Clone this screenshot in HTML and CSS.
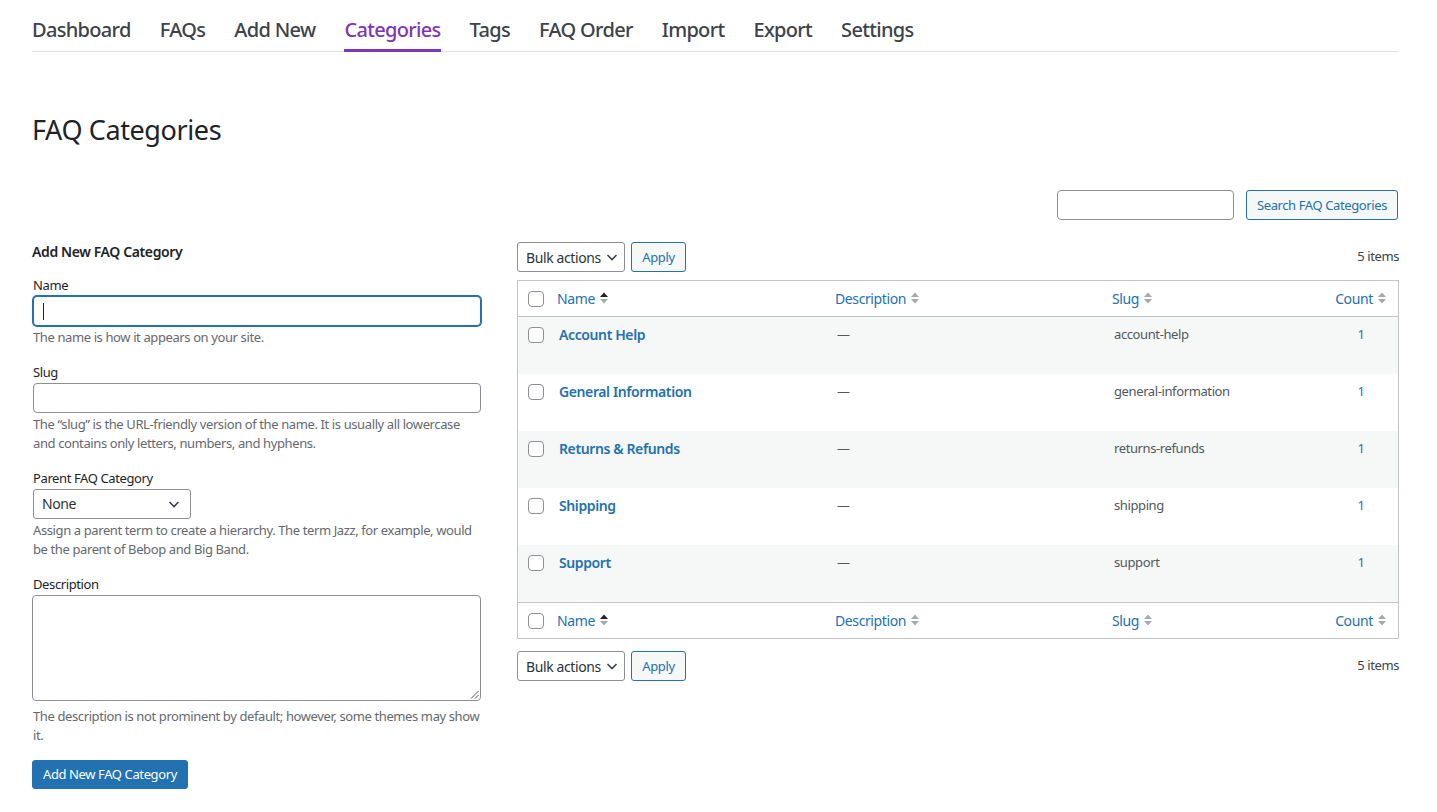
FILE: index.html
```html
<!DOCTYPE html>
<html lang="en">
<head>
<meta charset="utf-8">
<title>FAQ Categories</title>
<link rel="stylesheet" href="styles.css">
</head>
<body>
<div class="wrap">
  <nav class="tabs">
    <a class="tab" href="#">Dashboard</a>
    <a class="tab" href="#">FAQs</a>
    <a class="tab" href="#">Add New</a>
    <a class="tab active" href="#">Categories</a>
    <a class="tab" href="#">Tags</a>
    <a class="tab" href="#">FAQ Order</a>
    <a class="tab" href="#">Import</a>
    <a class="tab" href="#">Export</a>
    <a class="tab" href="#">Settings</a>
  </nav>

  <h1 class="page-title">FAQ Categories</h1>

  <div class="search-box">
    <input class="search-input" type="search" aria-label="Search FAQ Categories">
    <button class="btn-secondary search-btn">Search FAQ Categories</button>
  </div>

  <div class="cols">
    <div class="col-left">
      <h2 class="form-title">Add New FAQ Category</h2>
      <div class="field">
        <label class="label">Name</label>
        <div class="input focused"><span class="caret"></span></div>
        <p class="help">The name is how it appears on your site.</p>
      </div>
      <div class="field">
        <label class="label">Slug</label>
        <div class="input"></div>
        <p class="help">The “slug” is the URL-friendly version of the name. It is usually all lowercase and contains only letters, numbers, and hyphens.</p>
      </div>
      <div class="field">
        <label class="label">Parent FAQ Category</label>
        <div class="select parent-select"><span>None</span>
          <svg class="chev" width="16" height="16" viewBox="0 0 16 16"><path d="M3.5 6l4.5 4.5L12.5 6" fill="none" stroke="#3c434a" stroke-width="1.6"/></svg>
        </div>
        <p class="help">Assign a parent term to create a hierarchy. The term Jazz, for example, would be the parent of Bebop and Big Band.</p>
      </div>
      <div class="field">
        <label class="label">Description</label>
        <div class="textarea">
          <svg class="grip" width="9" height="9" viewBox="0 0 9 9"><path d="M8.5 1L1 8.5M8.5 5L5 8.5" stroke="#50575e" stroke-width="1"/></svg>
        </div>
        <p class="help">The description is not prominent by default; however, some themes may show it.</p>
      </div>
      <button class="btn-primary">Add New FAQ Category</button>
    </div>

    <div class="col-right">
      <div class="tablenav">
        <div class="actions">
          <div class="select bulk"><span>Bulk actions</span>
            <svg class="chev" width="16" height="16" viewBox="0 0 16 16"><path d="M3.5 6l4.5 4.5L12.5 6" fill="none" stroke="#3c434a" stroke-width="1.6"/></svg>
          </div>
          <button class="btn-secondary apply">Apply</button>
        </div>
        <span class="count-items">5 items</span>
      </div>

      <table class="list">
        <colgroup>
          <col class="c-cb"><col class="c-name"><col class="c-desc"><col class="c-slug"><col class="c-count">
        </colgroup>
        <thead>
          <tr>
            <td class="cb"><span class="checkbox"></span></td>
            <th><a href="#">Name <svg class="sort" width="10" height="14" viewBox="0 0 10 14"><path d="M1 6L5 1.5 9 6z" fill="#1d2327"/><path d="M1 8l4 4.5L9 8z" fill="#a7aaad"/></svg></a></th>
            <th><a href="#">Description <svg class="sort" width="10" height="14" viewBox="0 0 10 14"><path d="M1 6L5 1.5 9 6z" fill="#a7aaad"/><path d="M1 8l4 4.5L9 8z" fill="#a7aaad"/></svg></a></th>
            <th><a href="#">Slug <svg class="sort" width="10" height="14" viewBox="0 0 10 14"><path d="M1 6L5 1.5 9 6z" fill="#a7aaad"/><path d="M1 8l4 4.5L9 8z" fill="#a7aaad"/></svg></a></th>
            <th class="num"><a href="#">Count <svg class="sort" width="10" height="14" viewBox="0 0 10 14"><path d="M1 6L5 1.5 9 6z" fill="#a7aaad"/><path d="M1 8l4 4.5L9 8z" fill="#a7aaad"/></svg></a></th>
          </tr>
        </thead>
        <tbody>
          <tr class="alt">
            <td class="cb"><span class="checkbox"></span></td>
            <td><a class="row-title" href="#">Account Help</a><div class="row-actions">Edit</div></td>
            <td>—</td><td>account-help</td><td class="num"><a href="#">1</a></td>
          </tr>
          <tr>
            <td class="cb"><span class="checkbox"></span></td>
            <td><a class="row-title" href="#">General Information</a><div class="row-actions">Edit</div></td>
            <td>—</td><td>general-information</td><td class="num"><a href="#">1</a></td>
          </tr>
          <tr class="alt">
            <td class="cb"><span class="checkbox"></span></td>
            <td><a class="row-title" href="#">Returns &amp; Refunds</a><div class="row-actions">Edit</div></td>
            <td>—</td><td>returns-refunds</td><td class="num"><a href="#">1</a></td>
          </tr>
          <tr>
            <td class="cb"><span class="checkbox"></span></td>
            <td><a class="row-title" href="#">Shipping</a><div class="row-actions">Edit</div></td>
            <td>—</td><td>shipping</td><td class="num"><a href="#">1</a></td>
          </tr>
          <tr class="alt">
            <td class="cb"><span class="checkbox"></span></td>
            <td><a class="row-title" href="#">Support</a><div class="row-actions">Edit</div></td>
            <td>—</td><td>support</td><td class="num"><a href="#">1</a></td>
          </tr>
        </tbody>
        <tfoot>
          <tr>
            <td class="cb"><span class="checkbox"></span></td>
            <th><a href="#">Name <svg class="sort" width="10" height="14" viewBox="0 0 10 14"><path d="M1 6L5 1.5 9 6z" fill="#1d2327"/><path d="M1 8l4 4.5L9 8z" fill="#a7aaad"/></svg></a></th>
            <th><a href="#">Description <svg class="sort" width="10" height="14" viewBox="0 0 10 14"><path d="M1 6L5 1.5 9 6z" fill="#a7aaad"/><path d="M1 8l4 4.5L9 8z" fill="#a7aaad"/></svg></a></th>
            <th><a href="#">Slug <svg class="sort" width="10" height="14" viewBox="0 0 10 14"><path d="M1 6L5 1.5 9 6z" fill="#a7aaad"/><path d="M1 8l4 4.5L9 8z" fill="#a7aaad"/></svg></a></th>
            <th class="num"><a href="#">Count <svg class="sort" width="10" height="14" viewBox="0 0 10 14"><path d="M1 6L5 1.5 9 6z" fill="#a7aaad"/><path d="M1 8l4 4.5L9 8z" fill="#a7aaad"/></svg></a></th>
          </tr>
        </tfoot>
      </table>

      <div class="tablenav bottom">
        <div class="actions">
          <div class="select bulk"><span>Bulk actions</span>
            <svg class="chev" width="16" height="16" viewBox="0 0 16 16"><path d="M3.5 6l4.5 4.5L12.5 6" fill="none" stroke="#3c434a" stroke-width="1.6"/></svg>
          </div>
          <button class="btn-secondary apply">Apply</button>
        </div>
        <span class="count-items">5 items</span>
      </div>
    </div>
  </div>
</div>
</body>
</html>
```

FILE: styles.css
```css
* { box-sizing: border-box; }
html, body { margin: 0; padding: 0; background: #fff; }
body {
  font-family: "Segoe UI", "Noto Sans", "Open Sans", sans-serif;
  font-size: 13px;
  line-height: 1.5;
  color: #3c434a;
  letter-spacing: -0.03em;
}
a { text-decoration: none; color: #2271b1; }
button, input { letter-spacing: inherit; }

.wrap { padding: 0 39px 0 32px; }

/* tabs */
.tabs {
  display: flex;
  gap: 29px;
  padding-top: 14px;
  border-bottom: 1px solid #e0e0e0;
}
.tab {
  font-size: 20px;
  font-weight: 500;
  line-height: 32px;
  letter-spacing: -0.034em;
  color: #3c434a;
  padding-bottom: 3px;
  border-bottom: 3px solid transparent;
  margin-bottom: -1px;
}
.tab.active { color: #7e36b8; border-bottom-color: #7e36b8; }

.page-title {
  font-size: 27px;
  font-weight: 400;
  color: #1d2327;
  line-height: 36px;
  margin: 60px 0 0;
}

.search-box {
  display: flex;
  justify-content: flex-end;
  gap: 12px;
  margin-top: 42px;
}
.search-input {
  width: 177px;
  height: 30px;
  border: 1px solid #8c8f94;
  border-radius: 4px;
  margin: 0;
  padding: 0 8px;
}
.btn-secondary {
  font-family: inherit;
  font-size: 13px;
  color: #2271b1;
  background: #f6f7f7;
  border: 1px solid #2271b1;
  border-radius: 3px;
  height: 30px;
  padding: 0 10px;
  margin: 0;
  cursor: pointer;
  white-space: nowrap;
}
.search-btn { width: 152px; padding: 0; }

.cols {
  display: grid;
  grid-template-columns: 449px 1fr;
  gap: 36px;
  margin-top: 22px;
}

/* left form */
.col-left { padding-left: 1px; }
.form-title {
  font-size: 14px;
  font-weight: 600;
  color: #1d2327;
  line-height: 20px;
  margin: 0 0 13px;
  margin-left: -1px;
}
.field { margin-bottom: 14px; }
.label {
  display: block;
  color: #1d2327;
  line-height: 20px;
  margin-bottom: 1px;
}
.input {
  height: 30px;
  border: 1px solid #8c8f94;
  border-radius: 4px;
  background: #fff;
  position: relative;
}
.input.focused {
  border-color: #2271b1;
  box-shadow: 0 0 0 1px #2271b1;
}
.caret {
  position: absolute;
  left: 9px;
  top: 6px;
  width: 1px;
  height: 17px;
  background: #1d2327;
}
.help {
  margin: 2px 0 0;
  color: #646970;
  line-height: 19.5px;
}
.select {
  height: 30px;
  border: 1px solid #8c8f94;
  border-radius: 3px;
  background: #fff;
  display: flex;
  align-items: center;
  justify-content: space-between;
  padding: 0 8px 0 8px;
  color: #2c3338;
  font-size: 14px;
  white-space: nowrap;
}
.parent-select { width: 158px; }
.chev { display: block; flex: none; }
.textarea {
  height: 106px;
  margin-left: -1px;
  border: 1px solid #8c8f94;
  border-radius: 4px;
  position: relative;
  margin-bottom: 6px;
}
.grip { position: absolute; right: 1px; bottom: 1px; }
.btn-primary {
  margin-left: -1px;
  font-family: inherit;
  font-size: 13px;
  color: #fff;
  background: #2271b1;
  border: 1px solid #2271b1;
  border-radius: 3px;
  height: 29px;
  padding: 0 10px;
  cursor: pointer;
  white-space: nowrap;
}

/* right */
.tablenav {
  display: flex;
  justify-content: space-between;
  align-items: center;
  height: 30px;
  margin-bottom: 8px;
}
.tablenav.bottom { margin: 12px 0 0; }
.actions { display: flex; gap: 6px; }
.bulk { width: 108px; padding-right: 4px; }
.apply { width: 55px; padding: 0; }
.count-items { color: #3c434a; }

.list {
  width: 100%;
  border: 1px solid #c3c4c7;
  border-collapse: separate;
  border-spacing: 0;
  table-layout: fixed;
}
.c-cb { width: 31px; }
.c-name { width: 278px; }
.c-desc { width: 277px; }
.c-slug { width: 220px; }
.c-count { width: 74px; }
.list th, .list td { text-align: left; vertical-align: top; }
.list thead th, .list thead td,
.list tfoot th, .list tfoot td {
  height: 36px;
  vertical-align: middle;
  font-weight: 400;
  font-size: 14px;
  padding: 0 8px 1px;
}
.list thead th, .list thead td { border-bottom: 1px solid #c3c4c7; }
.list tfoot th, .list tfoot td { border-top: 1px solid #c3c4c7; }
.list th a { display: inline-flex; align-items: center; gap: 4px; }
.sort { display: block; }
.list .cb { padding: 0 0 0 10px; }
.list tbody td {
  padding: 8px 10px;
  color: #50575e;
  height: 57px;
}
.list tbody td.cb { padding: 10px 0 0 10px; }
.list tbody tr.alt td { background: #f6f7f7; }
.list .num { text-align: center; }
.list th.num a { justify-content: center; }
.row-title { font-size: 14px; font-weight: 600; line-height: 19px; }
.row-actions { visibility: hidden; line-height: 20px; }
.checkbox {
  display: block;
  width: 16px;
  height: 16px;
  border: 1px solid #8c8f94;
  border-radius: 4px;
  background: #fff;
}
```
